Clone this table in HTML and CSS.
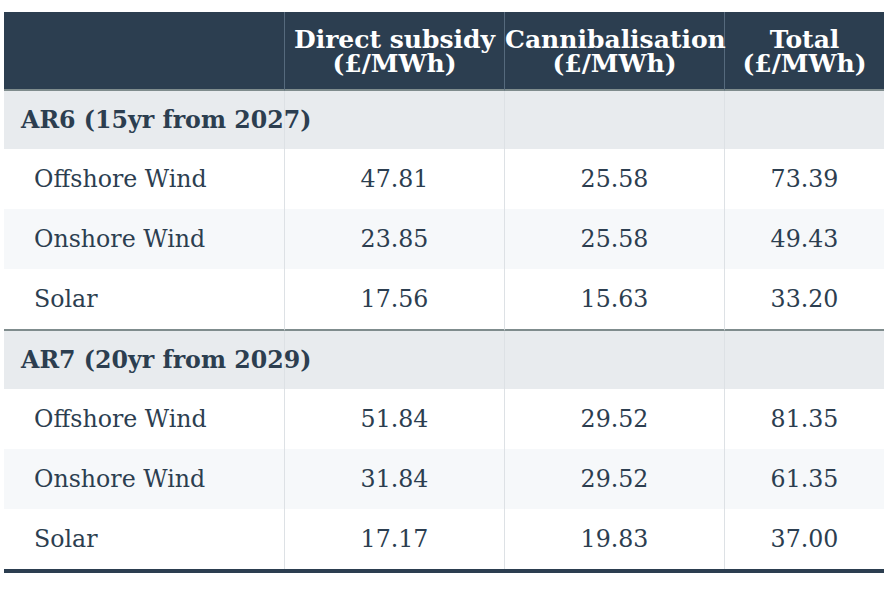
FILE: index.html
```html
<!DOCTYPE html>
<html>
<head>
<meta charset="utf-8">
<link rel="stylesheet" href="styles.css">
</head>
<body>
<table class="cfd">
  <colgroup>
    <col class="c-label">
    <col class="c-mid">
    <col class="c-mid">
    <col class="c-last">
  </colgroup>
  <thead>
    <tr>
      <th class="label-col"></th>
      <th>Direct subsidy<br>(£/MWh)</th>
      <th>Cannibalisation<br>(£/MWh)</th>
      <th>Total<br>(£/MWh)</th>
    </tr>
  </thead>
  <tbody>
    <tr class="section"><td>AR6 (15yr from 2027)</td><td></td><td></td><td></td></tr>
    <tr><td>Offshore Wind</td><td>47.81</td><td>25.58</td><td>73.39</td></tr>
    <tr class="alt"><td>Onshore Wind</td><td>23.85</td><td>25.58</td><td>49.43</td></tr>
    <tr class="last"><td>Solar</td><td>17.56</td><td>15.63</td><td>33.20</td></tr>
    <tr class="section"><td>AR7 (20yr from 2029)</td><td></td><td></td><td></td></tr>
    <tr><td>Offshore Wind</td><td>51.84</td><td>29.52</td><td>81.35</td></tr>
    <tr class="alt"><td>Onshore Wind</td><td>31.84</td><td>29.52</td><td>61.35</td></tr>
    <tr><td>Solar</td><td>17.17</td><td>19.83</td><td>37.00</td></tr>
  </tbody>
</table>
</body>
</html>
```

FILE: styles.css
```css
html, body {
  margin: 0;
  padding: 0;
  background: #ffffff;
}
body {
  padding: 12px 0 0 4px;
  font-family: "DejaVu Serif", serif;
  color: #2c3e50;
}
.cfd {
  width: 880px;
  border-collapse: separate;
  border-spacing: 0;
  table-layout: fixed;
  border-bottom: 4px solid #2c3e50;
}
.c-label { width: 280px; }
.c-mid { width: 220px; }
.c-last { width: 160px; }
.cfd th {
  background: #2c3e50;
  color: #ffffff;
  font-weight: bold;
  font-size: 25px;
  line-height: 24.5px;
  height: 79px;
  padding: 3px 0 0 0;
  box-sizing: border-box;
  text-align: center;
  white-space: nowrap;
  border-bottom: 2px solid #7f8c8d;
  border-left: 1px solid #566a7d;
}
.cfd th.label-col {
  border-left: none;
}
.cfd td {
  height: 60px;
  padding: 0;
  font-size: 23.7px;
  text-align: center;
  white-space: nowrap;
  border-left: 1px solid #dde1e5;
}
.cfd td:first-child {
  text-align: left;
  padding-left: 30px;
  border-left: none;
}
.cfd tr.section td {
  background: #e8ebee;
  font-weight: bold;
  height: 58px;
}
.cfd tr.section td:first-child {
  padding-left: 17px;
}
.cfd tr.alt td {
  background: #f6f8fa;
}
.cfd tr.last td {
  border-bottom: 2px solid #7f8c8d;
}
```
